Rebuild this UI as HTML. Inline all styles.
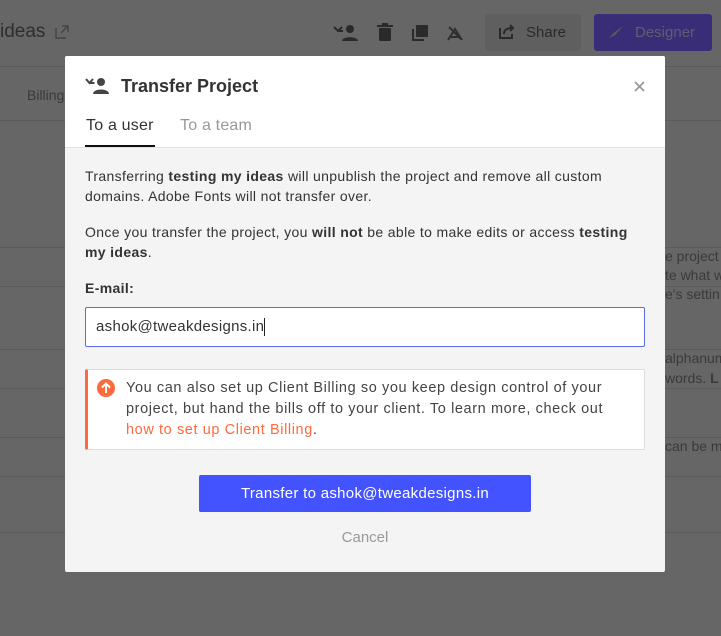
<!DOCTYPE html>
<html style="background:#666"><head><meta charset="utf-8"><style>
*{box-sizing:border-box;margin:0;padding:0}
html,body{background:#666}
body{width:721px;height:636px;overflow:hidden;font-family:"Liberation Sans",sans-serif;position:relative;color:#333}
.hl{position:absolute;left:0;width:721px;height:1px;background:#5a5a5a}
.bgt{position:absolute;color:#3a3a3a;font-size:14px;white-space:nowrap}
.modal{position:absolute;left:65px;top:56px;width:600px;height:516px;background:#f4f4f4;border-radius:2px;overflow:hidden}
.head{background:#fff;height:92px;border-bottom:1px solid #e2e2e2;position:relative}
p{font-size:14px;line-height:20px;color:#333;letter-spacing:.35px;white-space:nowrap}
</style></head><body>
<div class="bgt" style="left:0;top:21px;font-size:19px;color:#2e2e2e">ideas</div>
<svg style="position:absolute;left:54px;top:24px" width="16" height="16"><path d="M2 4v10h10M8 2h6v6M14 2 7 9" fill="none" stroke="#444" stroke-width="1.4"/></svg>
<svg style="position:absolute;left:333px;top:24px" width="26" height="18"><path d="M1 3 5 7 9 3M5 7h5" fill="none" stroke="#2a2a2a" stroke-width="2"/><circle cx="17" cy="5" r="4" fill="#2a2a2a"/><path d="M9 17c0-5 16-5 16 0z" fill="#2a2a2a"/></svg>
<svg style="position:absolute;left:377px;top:23px" width="16" height="19"><rect x="2" y="5" width="12" height="13" rx="1" fill="#2a2a2a"/><rect x="0" y="2" width="16" height="2" fill="#2a2a2a"/><rect x="5" y="0" width="6" height="3" fill="#2a2a2a"/></svg>
<svg style="position:absolute;left:411px;top:24px" width="18" height="18"><rect x="5" y="1" width="12" height="12" rx="1" fill="#2a2a2a"/><path d="M2 5v11h11" fill="none" stroke="#2a2a2a" stroke-width="2"/></svg>
<svg style="position:absolute;left:446px;top:24px" width="18" height="18"><path d="M2 16 9 5 16 16M4 13h10M3 3 15 15" fill="none" stroke="#2f2f2f" stroke-width="2"/></svg>
<div style="position:absolute;left:485px;top:14px;width:96px;height:37px;background:#5f5f5f;border-radius:3px"></div>
<svg style="position:absolute;left:498px;top:24px" width="18" height="16"><path d="M2 4v10h12v-4M6 10c0-5 4-6 9-6M12 1l3 3-3 3" fill="none" stroke="#2a2a2a" stroke-width="2"/></svg>
<div class="bgt" style="left:526px;top:24px;font-size:15px;color:#2a2a2a">Share</div>
<div style="position:absolute;left:594px;top:14px;width:118px;height:37px;background:#3a2d78;border-radius:3px"></div>
<div style="position:absolute;left:609px;top:26px;width:14px;height:12px;background:#5a5a5a;clip-path:polygon(0 100%,30% 60%,100% 0,45% 75%)"></div>
<div class="bgt" style="left:635px;top:24px;font-size:15px;color:#5e5e6e">Designer</div>
<div class="hl" style="top:66px"></div>
<div class="bgt" style="left:27px;top:87px">Billing</div>
<div class="hl" style="top:120px"></div>
<div class="hl" style="top:247px"></div>
<div class="hl" style="top:286px"></div>
<div class="hl" style="top:349px"></div>
<div class="hl" style="top:388px"></div>
<div class="hl" style="top:437px"></div>
<div class="hl" style="top:476px"></div>
<div class="hl" style="top:532px"></div>
<div class="bgt" style="left:665px;top:247px;line-height:19px">e project<br>te what w<br>e's settin</div>
<div class="bgt" style="left:665px;top:348px;line-height:20px">alphanum<br>words. <b>L</b></div>
<div class="bgt" style="left:665px;top:438px">can be m</div>

<div class="modal">
 <div class="head">
  <svg style="position:absolute;left:20px;top:21px" width="26" height="18"><path d="M1 2 4.5 6 8 2M4.5 6h5" fill="none" stroke="#444" stroke-width="2"/><circle cx="16" cy="5" r="4" fill="#444"/><path d="M8 17c0-6 16-6 16 0z" fill="#444"/></svg>
  <div style="position:absolute;left:56px;top:20px;font-size:18px;font-weight:bold;color:#333">Transfer Project</div>
  <svg style="position:absolute;left:569px;top:25px" width="11" height="11"><path d="M1 1 10 10M10 1 1 10" stroke="#999" stroke-width="1.8"/></svg>
  <div style="position:absolute;left:21px;top:61px;font-size:16px;color:#333;letter-spacing:.2px">To a user</div>
  <div style="position:absolute;left:20px;top:89px;width:70px;height:2px;background:#111"></div>
  <div style="position:absolute;left:115px;top:61px;font-size:16px;color:#999;letter-spacing:.2px">To a team</div>
 </div>
 <div style="position:absolute;left:20px;top:110px;width:560px">
  <p>Transferring <b>testing my ideas</b> will unpublish the project and remove all custom<br>domains. Adobe Fonts will not transfer over.</p>
  <p style="margin-top:16px">Once you transfer the project, you <b>will not</b> be able to make edits or access <b>testing</b><br><b>my ideas</b>.</p>
  <p style="margin-top:16px;font-weight:bold">E-mail:</p>
 </div>
 <div style="position:absolute;left:20px;top:251px;width:560px;height:40px;background:#fff;border:1px solid #5a6af0;border-radius:2px;padding:0 10px;font-size:15px;line-height:38px;color:#333;letter-spacing:.3px">ashok@tweakdesigns.in<span style="display:inline-block;width:1px;height:18px;background:#222;vertical-align:middle"></span></div>
 <div style="position:absolute;left:20px;top:313px;width:560px;height:81px;background:#fff;border:1px solid #ddd;border-left:3px solid #ff6a3d;border-radius:2px">
  <svg style="position:absolute;left:9px;top:9px" width="18" height="18"><circle cx="9" cy="9" r="9" fill="#ff6a3d"/><path d="M9 14V5M5 8.5 9 4.5 13 8.5" fill="none" stroke="#fff" stroke-width="2"/></svg>
  <p style="position:absolute;left:38px;top:8px;line-height:21px;color:#444;font-size:14.5px;letter-spacing:.6px">You can also set up Client Billing so you keep design control of your<br>project, but hand the bills off to your client. To learn more, check out<br><span style="color:#ff6a3d">how to set up Client Billing</span>.</p>
 </div>
 <div style="position:absolute;left:134px;top:419px;width:332px;height:37px;background:#4353ff;border-radius:2px;color:#fff;font-size:15px;text-align:center;line-height:37px;letter-spacing:.3px">Transfer to ashok@tweakdesigns.in</div>
 <div style="position:absolute;left:0;top:473px;width:600px;text-align:center;font-size:15px;color:#999">Cancel</div>
</div>
</body></html>
